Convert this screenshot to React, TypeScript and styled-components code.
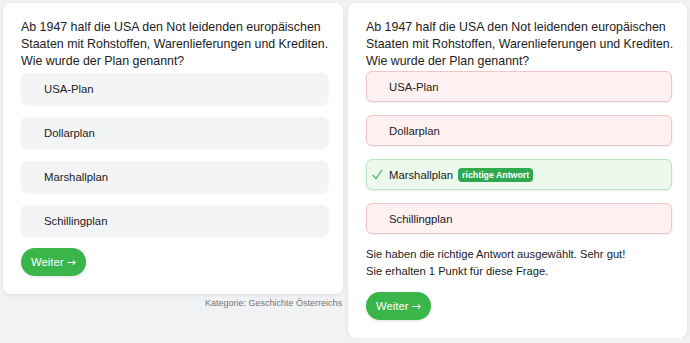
import React from 'react'
import styled, { createGlobalStyle } from 'styled-components'

const GlobalStyle = createGlobalStyle`
body {
  margin: 0;
  background-color: #f1f2f4;
  font-family: 'Liberation Sans', Arial, sans-serif;
  color: #222;
}
`

type Status = 'neutral' | 'wrong' | 'right'

const answers = ['USA-Plan', 'Dollarplan', 'Marshallplan', 'Schillingplan']

const Question = () => (
  <QuestionText>
    Ab 1947 half die USA den Not leidenden europäischen
    <br />
    Staaten mit Rohstoffen, Warenlieferungen und Krediten.
    <br />
    Wie wurde der Plan genannt?
  </QuestionText>
)

const Check = () => (
  <svg width="11" height="11" viewBox="0 0 11 11">
    <path d="M1 6.2 L4 9.6 L10 1" fill="none" stroke="#4cb25b" strokeWidth="1.2" strokeLinecap="round" strokeLinejoin="round" />
  </svg>
)

const App = () => {
  return (
    <Page>
      <GlobalStyle />
      <Column>
        <Card>
          <Question />
          <Options $top={3}>
            {answers.map((a) => (
              <Option key={a} $status="neutral">
                <Mark />
                <Label>{a}</Label>
              </Option>
            ))}
          </Options>
          <Button>
            Weiter <Arrow>→</Arrow>
          </Button>
        </Card>
        <Category>Kategorie: Geschichte Österreichs</Category>
      </Column>
      <Column>
        <Card>
          <Question />
          <Options $top={1}>
            {answers.map((a) => {
              const right = a === 'Marshallplan'
              return (
                <Option key={a} $status={right ? 'right' : 'wrong'}>
                  <Mark>{right && <Check />}</Mark>
                  <Label>{a}</Label>
                  {right && <Badge>richtige Antwort</Badge>}
                </Option>
              )
            })}
          </Options>
          <Feedback>
            <p>Sie haben die richtige Antwort ausgewählt. Sehr gut!</p>
            <p>Sie erhalten 1 Punkt für diese Frage.</p>
          </Feedback>
          <Button>
            Weiter <Arrow>→</Arrow>
          </Button>
        </Card>
      </Column>
    </Page>
  )
}

export default App

const Page = styled.div`
display: grid;
grid-template-columns: 340px 339px;
gap: 5px;
padding: 3px 3px 0 3px;
align-items: start;
`

const Column = styled.div`
display: flex;
flex-direction: column;
`

const Card = styled.div`
background-color: #fff;
border-radius: 8px;
box-shadow: 0 1px 4px rgba(0, 0, 0, 0.08);
padding: 16px 15px 18px 18px;
display: flex;
flex-direction: column;
align-items: flex-start;
`

const QuestionText = styled.div`
font-size: 12.4px;
line-height: 17px;
color: #222;
white-space: nowrap;
`

const Options = styled.div<{ $top: number }>`
margin-top: ${(p) => p.$top}px;
width: 100%;
display: flex;
flex-direction: column;
gap: 13px;
`

const optionColors: Record<Status, { bg: string; border: string }> = {
  neutral: { bg: '#f3f4f6', border: '#f3f4f6' },
  wrong: { bg: '#fff1f1', border: '#f2c6c9' },
  right: { bg: '#ebfaec', border: '#b9e6c1' },
}

const Option = styled.div<{ $status: Status }>`
height: 31px;
box-sizing: border-box;
display: flex;
align-items: center;
padding: 0 10px 0 5px;
border-radius: 6px;
background-color: ${(p) => optionColors[p.$status].bg};
border: 1px solid ${(p) => optionColors[p.$status].border};
box-shadow: 0 1px 3px rgba(0, 0, 0, 0.07);
font-size: 11.3px;
`

const Mark = styled.span`
width: 17px;
flex-shrink: 0;
display: flex;
align-items: center;
`

const Label = styled.span`
color: #222;
`

const Badge = styled.span`
margin-left: 5px;
background-color: #2fa84f;
color: #fff;
font-weight: 700;
font-size: 8.8px;
line-height: 14px;
padding: 0 4px;
border-radius: 4px;
`

const Feedback = styled.div`
margin-top: 12px;
font-size: 11.2px;
line-height: 17px;
color: #222;
p {
  margin: 0;
}
`

const Button = styled.button`
margin-top: 12px;
height: 28px;
padding: 0 10px;
border: none;
border-radius: 14px;
background-color: #39b54a;
color: #fff;
font-family: 'Liberation Sans', Arial, sans-serif;
font-size: 11.3px;
box-shadow: 0 1px 3px rgba(0, 0, 0, 0.12);
cursor: pointer;
`

const Arrow = styled.span`
font-family: 'DejaVu Sans', sans-serif;
font-size: 11px;
`

const Category = styled.div`
margin-top: 4px;
text-align: right;
font-size: 9px;
color: #777;
padding-right: 1px;
`
